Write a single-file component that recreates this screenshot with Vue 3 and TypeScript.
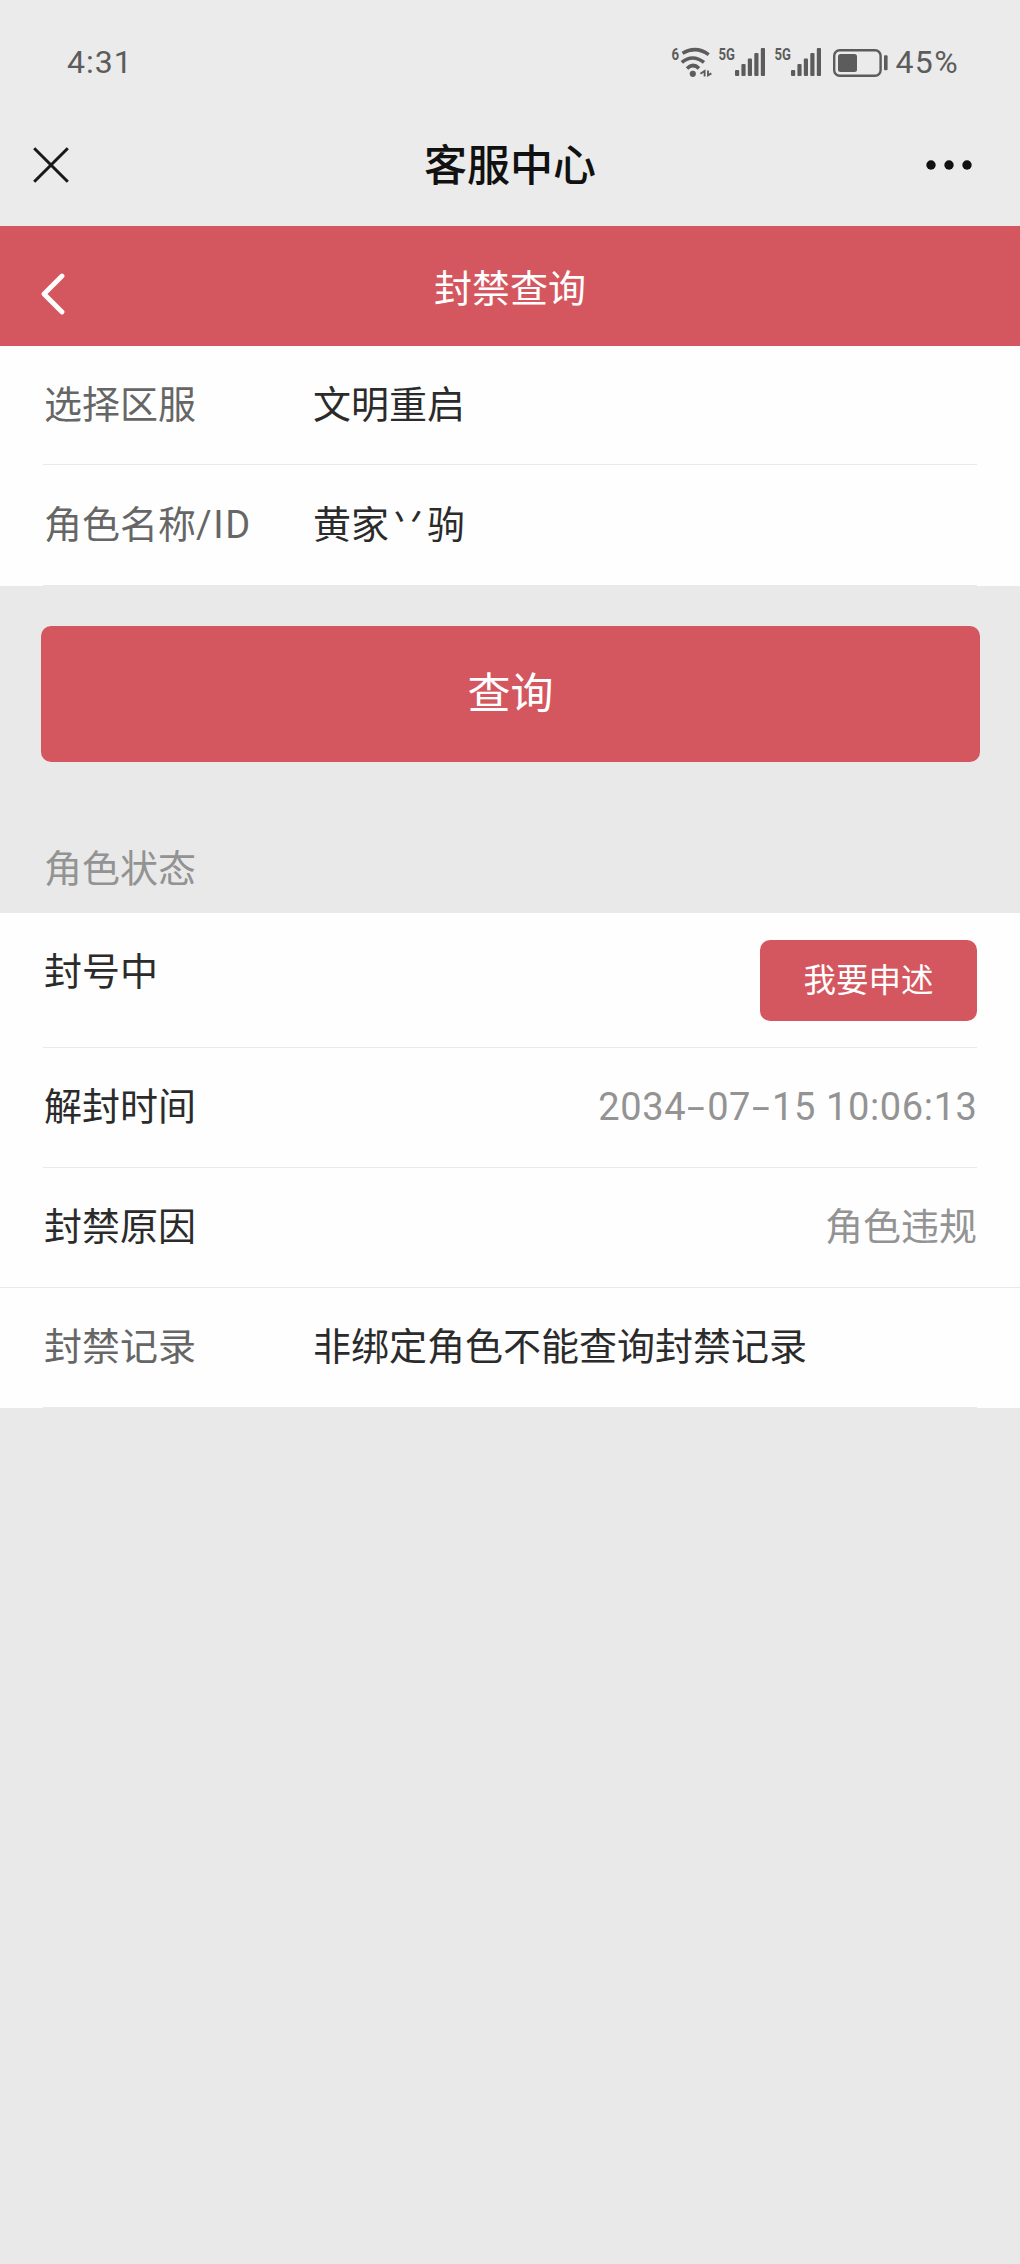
<script setup lang="ts">
interface Part {
  text: string
  kind?: string
}

interface Row {
  label: Part[]
  value: Part[]
}

const queryRows: Row[] = [
  { label: [{ text: '选择区服' }], value: [{ text: '文明重启' }] },
  {
    label: [{ text: '角色名称' }, { text: '/ID', kind: 'latin' }],
    value: [{ text: '黄家' }, { text: '丷', kind: 'horns' }, { text: '驹' }],
  },
]

const unbanDate: string[] = ['2034', '07', '15 10:06:13']

const signalBars = [
  { x: 17, y: 25 },
  { x: 23.4, y: 19 },
  { x: 29.8, y: 13.5 },
  { x: 36.3, y: 8 },
  { x: 42.8, y: 3 },
]
</script>

<template>
  <div class="screen">
    <header class="top">
      <div class="status">
        <span class="clock">4:31</span>
        <div class="indicators">
          <svg class="wifi" width="42" height="34" viewBox="0 0 42 34">
            <text x="0.6" y="14.8" class="tag" textLength="7.6" lengthAdjust="spacingAndGlyphs">6</text>
            <g fill="none" stroke="#5c5c5c" stroke-width="3.6">
              <path d="M11.5 8.2Q25 .5 37.7 9.6" />
              <path d="M10.8 17.4Q21.5 8.6 33 17.4" />
              <path d="M16 23.4Q21.8 17.6 28 23.4" />
            </g>
            <circle cx="21.8" cy="28.8" r="3.1" fill="#5c5c5c" />
            <path d="M29.4 28.8L33.6 26V31.6M40.4 28.4L37 30.4V25.4" fill="none" stroke="#5c5c5c" stroke-width="1.9" />
          </svg>
          <svg v-for="n in 2" :key="n" class="signal" width="48" height="34" viewBox="0 0 48 34">
            <text x="0.5" y="14.8" class="tag" textLength="16.4" lengthAdjust="spacingAndGlyphs">5G</text>
            <rect
              v-for="bar in signalBars"
              :key="bar.x"
              :x="bar.x"
              :y="bar.y"
              width="4.2"
              :height="31 - bar.y"
              rx="1"
              fill="#5c5c5c"
            />
          </svg>
          <svg class="battery" width="57" height="34" viewBox="0 0 57 34">
            <rect x="2.2" y="5.3" width="46.4" height="25.4" rx="5.5" fill="none" stroke="#5c5c5c" stroke-width="2.4" />
            <rect x="6" y="9" width="19" height="18" rx="2.5" fill="#5c5c5c" />
            <rect x="52" y="10.3" width="3.6" height="15" rx="1" fill="#5c5c5c" />
          </svg>
          <span class="percent">45%</span>
        </div>
      </div>
      <div class="titlebar">
        <svg width="36" height="36" viewBox="0 0 36 36">
          <path d="M1.2 1.2L34.8 34.8M34.8 1.2L1.2 34.8" stroke="#191919" stroke-width="3" />
        </svg>
        <h1>客服中心</h1>
        <svg class="more" width="48" height="12" viewBox="0 0 48 12" fill="#111">
          <circle cx="6" cy="6" r="4.7" />
          <circle cx="24" cy="6" r="4.7" />
          <circle cx="42" cy="6" r="4.7" />
        </svg>
      </div>
    </header>

    <nav class="navbar">
      <svg width="26" height="42" viewBox="0 0 26 42">
        <path d="M22 3L4 21L22 39" fill="none" stroke="#fff" stroke-width="4.8" stroke-linecap="round" stroke-linejoin="round" />
      </svg>
      <h2>封禁查询</h2>
    </nav>

    <section class="panel form">
      <div v-for="(row, r) in queryRows" :key="r" class="row">
        <span class="label"><span v-for="p in row.label" :key="p.text" :class="p.kind">{{ p.text }}</span></span>
        <span class="value"><span v-for="p in row.value" :key="p.text" :class="p.kind">{{ p.text }}</span></span>
      </div>
    </section>

    <button class="query">查询</button>

    <h3 class="caption">角色状态</h3>

    <section class="panel">
      <div class="row state">
        <span class="name">封号中</span>
        <button class="appeal">我要申述</button>
      </div>
      <div class="row">
        <span class="name">解封时间</span>
        <span class="detail date">
          <template v-for="(part, i) in unbanDate" :key="i"><span v-if="i" class="dash">-</span>{{ part }}</template>
        </span>
      </div>
      <div class="row borderless">
        <span class="name">封禁原因</span>
        <span class="detail">角色违规</span>
      </div>
      <div class="record">
        <div class="row">
          <span class="label">封禁记录</span>
          <span class="value">非绑定角色不能查询封禁记录</span>
        </div>
      </div>
    </section>
  </div>
</template>

<style>
body {
  background: #e9e9e9;
}
</style>

<style scoped>
.screen {
  width: 1020px;
  height: 2264px;
  background: #e9e9e9;
  font-family: Roboto, 'Noto Sans CJK SC', sans-serif;
  font-size: 38px;
  line-height: 56px;
  color: #2b2b2b;
  overflow: hidden;
}
h1, h2, h3 {
  margin: 0;
  font-weight: 400;
}
button {
  display: block;
  border: 0;
  padding: 0;
  background: #d4575f;
  color: #fff;
  font-family: inherit;
  border-radius: 10px;
}
svg {
  display: block;
  flex: none;
}
.top {
  height: 226px;
  background: #ebebeb;
}
.status {
  height: 104px;
  padding: 20px 61px 0 67px;
  display: flex;
  justify-content: space-between;
  align-items: center;
  box-sizing: border-box;
  font-size: 32px;
  color: #5c5c5c;
}
.clock {
  letter-spacing: 1px;
}
.percent {
  letter-spacing: 1.4px;
}
.indicators {
  display: flex;
  align-items: center;
}
.tag {
  font: 700 16.5px Roboto, sans-serif;
  fill: #5c5c5c;
}
.wifi {
  margin-right: 5px;
}
.signal {
  margin-right: 8px;
}
.battery {
  margin: 0 6px 0 2px;
}
.titlebar {
  height: 122px;
  padding: 0 47px 0 33px;
  display: grid;
  grid-template-columns: 70px 1fr 56px;
  align-items: center;
  box-sizing: border-box;
}
.titlebar h1 {
  padding-top: 1px;
  font-size: 43px;
  font-weight: 500;
  text-align: center;
  color: #111;
}
.more {
  justify-self: end;
}
.navbar {
  height: 120px;
  padding: 0 40px;
  display: grid;
  grid-template-columns: 60px 1fr 60px;
  align-items: center;
  background: #d4575f;
  color: #fff;
}
.navbar svg {
  margin-top: 16px;
}
.navbar h2 {
  padding-top: 5px;
  font-size: 38px;
  text-align: center;
}
.panel {
  background: #fefefe;
}
.row {
  height: 120px;
  margin: 0 43px;
  padding: 0 0 1px 1px;
  display: flex;
  align-items: center;
  box-sizing: border-box;
  border-bottom: 1px solid #e9e9e9;
}
.form .row:first-child {
  height: 119px;
}
.form .row:last-child {
  height: 121px;
}
.label {
  width: 269px;
  color: #666;
}
.latin {
  letter-spacing: 1.6px;
}
.horns {
  display: inline-block;
  transform: translateY(-7px) scaleY(0.9);
}
.name {
  flex: 1;
}
.detail {
  color: #939393;
}
.date {
  letter-spacing: 0.62px;
  margin-right: -0.6px;
}
.dash {
  display: inline-block;
  width: 21px;
  text-align: center;
  transform: scaleX(1.7);
}
.query {
  width: 939px;
  height: 136px;
  margin: 40px 0 0 41px;
  padding-bottom: 8px;
  font-size: 43px;
}
.caption {
  height: 151px;
  padding: 79px 44px 0;
  box-sizing: border-box;
  font-size: 38px;
  color: #939393;
}
.state {
  height: 135px;
  align-items: flex-start;
}
.state .name {
  margin-top: 31px;
}
.appeal {
  width: 217px;
  height: 81px;
  margin-top: 27px;
  padding-bottom: 7px;
  font-size: 32.5px;
}
.borderless {
  border-bottom-color: transparent;
}
.record {
  margin-top: -1px;
  border-top: 1px solid #e9e9e9;
}
</style>
